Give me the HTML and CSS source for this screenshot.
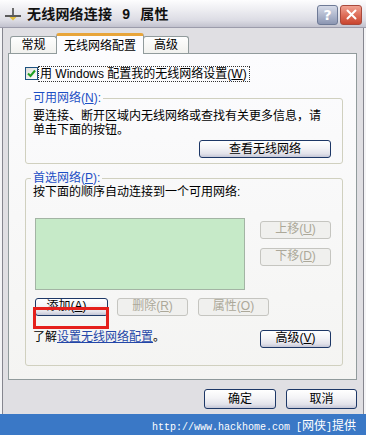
FILE: index.html
```html
<!DOCTYPE html>
<html lang="zh-CN">
<head>
  <meta charset="UTF-8">
  <title>无线网络连接 9 属性</title>
  <link rel="stylesheet" href="styles.css">
</head>
<body>
  <div class="window">
    <div class="titlebar">
      <svg class="app-icon" width="16" height="14" viewBox="0 0 16 14">
        <rect x="7" y="1" width="2" height="8" fill="#6b6b6b"/>
        <rect x="0" y="8" width="16" height="2" fill="#5a5a5a"/>
        <path d="M4.5 10 L8 13.5 L11.5 10 Z" fill="#e2bd3c"/>
      </svg>
      <span class="title">无线网络连接 9 属性</span>
      <div class="caption-btns">
        <span class="cap help">?</span>
        <span class="cap close">
          <svg width="11" height="11" viewBox="0 0 11 11">
            <path d="M1.5 1.5 L9.5 9.5 M9.5 1.5 L1.5 9.5" stroke="#fff" stroke-width="2" stroke-linecap="round"/>
          </svg>
        </span>
      </div>
    </div>

    <div class="dialog">
      <div class="tabs">
        <span class="tab tab-general">常规</span>
        <span class="tab active">无线网络配置</span>
        <span class="tab tab-adv">高级</span>
      </div>

      <div class="panel">
        <div class="check-row">
          <span class="checkbox">
            <svg width="11" height="11" viewBox="0 0 11 11">
              <path d="M2 5.5 L4.5 8 L9 2.5" fill="none" stroke="#21a121" stroke-width="2"/>
            </svg>
          </span>
          <span class="focus">用 Windows 配置我的无线网络设置(<u>W</u>)</span>
        </div>

        <fieldset class="group group-available">
          <legend>可用网络(<u>N</u>):</legend>
          <p>要连接、断开区域内无线网络或查找有关更多信息，请<br>单击下面的按钮。</p>
          <div class="row-end">
            <button class="btn btn-view">查看无线网络</button>
          </div>
        </fieldset>

        <fieldset class="group group-preferred">
          <legend>首选网络(<u>P</u>):</legend>
          <p>按下面的顺序自动连接到一个可用网络:</p>
          <div class="pref">
            <div class="net-list"></div>
            <div class="side-btns">
              <button class="btn" disabled>上移(<u>U</u>)</button>
              <button class="btn" disabled>下移(<u>D</u>)</button>
            </div>
          </div>
          <div class="btn-row">
            <button class="btn btn-add">添加(<u>A</u>)...</button>
            <button class="btn btn-del" disabled>删除(<u>R</u>)</button>
            <button class="btn btn-prop" disabled>属性(<u>O</u>)</button>
            <span class="mark"></span>
          </div>
          <div class="learn-row">
            <span>了解<a href="#">设置无线网络配置</a>。</span>
            <button class="btn btn-adv">高级(<u>V</u>)</button>
          </div>
        </fieldset>
      </div>

      <div class="dialog-btns">
        <button class="btn btn-ok">确定</button>
        <button class="btn btn-cancel">取消</button>
      </div>
    </div>

    <div class="footer">http://www.hackhome.com [<span class="cjk">网侠</span>]<span class="cjk">提供</span></div>
  </div>
</body>
</html>
```

FILE: styles.css
```css
body {
  margin: 0;
  width: 366px;
  height: 435px;
  overflow: hidden;
  background: #e0dfe3;
  font: 12px/14px "Liberation Sans", "Noto Sans CJK SC", sans-serif;
  color: #000;
}
.window {
  height: 435px;
  display: flex;
  flex-direction: column;
  box-shadow: inset 2px 0 #f4f4f6, inset 3px 0 #86868f, inset -2px 0 #f4f4f6, inset -3px 0 #86868f;
}

/* title bar */
.titlebar {
  box-sizing: border-box;
  height: 28px;
  display: flex;
  align-items: center;
  padding: 0 4px 0 5px;
  background: linear-gradient(#fdfdfe, #eeeef2 35%, #dcdce4 75%, #c2c2ce);
  border-bottom: 1px solid #9c9cab;
}
.app-icon { margin-right: 6px; }
.title {
  flex: 1;
  font-size: 14px;
  font-weight: 700;
  color: #111;
  letter-spacing: 0.2px;
  word-spacing: 6px;
}
.caption-btns {
  display: flex;
  gap: 2px;
  margin-top: 2px;
}
.cap {
  box-sizing: border-box;
  width: 21px;
  height: 20px;
  border-radius: 3px;
  display: flex;
  align-items: center;
  justify-content: center;
}
.help {
  border: 1px solid #6e7a96;
  background: linear-gradient(#d6dbe8, #a9b2c9 60%, #8c96b2);
  color: #fff;
  font: 700 14px/1 "DejaVu Sans", sans-serif;
}
.close {
  width: 22px;
  border: 1px solid #a8493c;
  background: linear-gradient(#f1a292, #dc6a55 55%, #c9452f);
}

/* dialog body */
.dialog {
  flex: 1;
  padding: 5px 9px 0 8px;
}
.tabs {
  display: flex;
  align-items: flex-end;
  height: 20px;
  padding-left: 2px;
  position: relative;
  z-index: 1;
}
.tab {
  box-sizing: border-box;
  height: 17px;
  line-height: 16px;
  text-align: center;
  border: 1px solid #919b9c;
  border-bottom: none;
  border-radius: 3px 3px 0 0;
  background: linear-gradient(#fefefe, #f1f1ee);
}
.tab-general { width: 47px; }
.tab-adv { width: 46px; }
.tab.active {
  width: 88px;
  height: 21px;
  margin: 0 -1px -1px;
  padding-top: 2px;
  line-height: 16px;
  border-top: 3px solid #e8a53a;
  background: #fcfcfe;
  position: relative;
  z-index: 1;
}
.panel {
  box-sizing: border-box;
  height: 327px;
  padding: 0 13px 0 16px;
  border: 1px solid #919b9c;
  background: linear-gradient(#fcfcfe, #f4f4f2);
}

.check-row {
  display: flex;
  align-items: center;
  margin-top: 13px;
  height: 13px;
}
.checkbox {
  box-sizing: border-box;
  width: 13px;
  height: 13px;
  border: 1px solid #1c5180;
  background: linear-gradient(135deg, #dcdcd7, #fff);
  display: flex;
  margin-right: 1px;
}
.focus {
  outline: 1px dotted #333;
  outline-offset: 0;
  padding: 0 2px 0 1px;
  line-height: 14px;
}

.group {
  margin: 11px 0 0;
  padding: 0 11px 0 7px;
  border: 1px solid #d0d0bf;
  border-radius: 3px;
  min-inline-size: auto;
}
.group legend {
  padding: 0 2px;
  margin-left: -2px;
  line-height: 14px;
  color: #1c4fc4;
}
.group p {
  margin: 0;
  line-height: 13.5px;
}
.group-available { padding-bottom: 5px; }
.group-available p { margin-top: 5px; }
.group-preferred { margin-top: 7px; padding-bottom: 17px; }
.group-preferred p { margin-top: 1px; }

.row-end {
  display: flex;
  justify-content: flex-end;
  margin-top: 3px;
}

.btn {
  box-sizing: border-box;
  height: 18px;
  padding: 0;
  font: inherit;
  line-height: 15px;
  color: #000;
  border: 1px solid #1d3766;
  border-radius: 3px;
  background: linear-gradient(#ffffff, #f3f3f6 45%, #e2e2ea 80%, #c4c6d6);
}
.btn:disabled {
  color: #aca899;
  border-color: #c5c5c0;
  background: #f0f0ee;
}
.btn-view { width: 132px; }

.pref {
  display: flex;
  margin-top: 18px;
}
.net-list {
  box-sizing: border-box;
  width: 210px;
  height: 72px;
  margin-left: 2px;
  border: 1px solid #a3b4a4;
  background: #c6eac8;
}
.side-btns {
  display: flex;
  flex-direction: column;
  gap: 9px;
  margin: 3px 0 0 15px;
}
.side-btns .btn { width: 71px; }

.btn-row {
  display: flex;
  margin-top: 8px;
  position: relative;
}
.btn-add { width: 73px; margin-left: 2px; }
.btn-del { width: 71px; margin-left: 9px; }
.btn-prop { width: 71px; margin-left: 10px; }
.mark {
  position: absolute;
  left: 0;
  top: 9px;
  box-sizing: border-box;
  width: 76px;
  height: 22px;
  border: 3px solid #e5201c;
}

.learn-row {
  display: flex;
  justify-content: space-between;
  align-items: flex-start;
  margin-top: 14px;
}
.learn-row span { line-height: 14px; }
.learn-row a { color: #2447a8; }
.btn-adv { width: 71px; }

.dialog-btns {
  display: flex;
  justify-content: flex-end;
  gap: 10px;
  margin-top: 9px;
}
.dialog-btns .btn { height: 20px; line-height: 17px; }
.btn-ok { width: 72px; }
.btn-cancel { width: 71px; }

.footer {
  height: 21px;
  line-height: 21px;
  padding-right: 10px;
  text-align: right;
  background: #3a78c6;
  color: #fff;
  font: 10px/21px "Liberation Mono", monospace;
  white-space: nowrap;
}
.footer .cjk {
  font: 12px/21px "Noto Sans CJK SC", sans-serif;
}
```
